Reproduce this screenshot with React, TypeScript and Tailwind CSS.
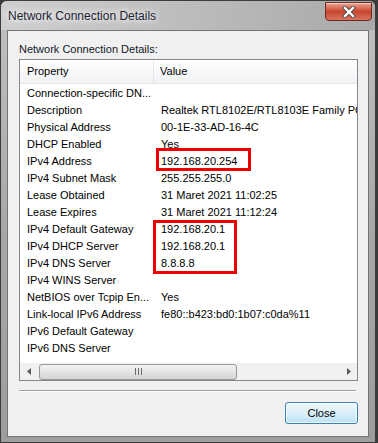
import React from 'react';

const rows: [string, string][] = [
  ['Connection-specific DN...', ''],
  ['Description', 'Realtek RTL8102E/RTL8103E Family PCI-E Fast Ethernet NIC (NDIS 6.20)'],
  ['Physical Address', '00-1E-33-AD-16-4C'],
  ['DHCP Enabled', 'Yes'],
  ['IPv4 Address', '192.168.20.254'],
  ['IPv4 Subnet Mask', '255.255.255.0'],
  ['Lease Obtained', '31 Maret 2021 11:02:25'],
  ['Lease Expires', '31 Maret 2021 11:12:24'],
  ['IPv4 Default Gateway', '192.168.20.1'],
  ['IPv4 DHCP Server', '192.168.20.1'],
  ['IPv4 DNS Server', '8.8.8.8'],
  ['IPv4 WINS Server', ''],
  ['NetBIOS over Tcpip En...', 'Yes'],
  ['Link-local IPv6 Address', 'fe80::b423:bd0:1b07:c0da%11'],
  ['IPv6 Default Gateway', ''],
  ['IPv6 DNS Server', ''],
];

const CloseButton: React.FC = () => (
  <div className="mt-[1px] mr-[3px] w-[47px] h-[19px] rounded-b-[4px] border border-[#6b2a22] bg-gradient-to-b from-[#e8a493] via-[#c8442f] to-[#d9725c] flex items-center justify-center shadow-[inset_0_1px_0_rgba(255,255,255,0.5)]">
    <svg width="14" height="12" viewBox="0 0 14 12">
      <path d="M3 2 L11 10 M11 2 L3 10" stroke="#4a4a4a" strokeWidth="4.2" strokeLinecap="square" />
      <path d="M3 2 L11 10 M11 2 L3 10" stroke="#ffffff" strokeWidth="2.4" strokeLinecap="square" />
    </svg>
  </div>
);

const ScrollBar: React.FC = () => (
  <div className="h-[17px] flex items-center bg-[#f0f0f0] shrink-0">
    <div className="w-[17px] h-full flex items-center justify-center">
      <svg width="4" height="7" viewBox="0 0 4 7"><path d="M4 0 L0 3.5 L4 7 Z" fill="#5a5a5a" /></svg>
    </div>
    <div className="ml-[2px] w-[198px] h-[16px] rounded-[3px] border border-[#979797] bg-gradient-to-b from-[#f4f4f4] via-[#e4e4e4] to-[#d5d5d5] flex items-center justify-center">
      <div className="flex gap-[2px]">
        <div className="w-[1px] h-[7px] bg-[#6a6a6a]" />
        <div className="w-[1px] h-[7px] bg-[#6a6a6a]" />
        <div className="w-[1px] h-[7px] bg-[#6a6a6a]" />
      </div>
    </div>
    <div className="flex-1" />
    <div className="w-[17px] h-full flex items-center justify-center">
      <svg width="4" height="7" viewBox="0 0 4 7"><path d="M0 0 L4 3.5 L0 7 Z" fill="#5a5a5a" /></svg>
    </div>
  </div>
);

export default function App() {
  return (
    <div className="relative w-[378px] h-[443px] bg-[#3a3a3a] overflow-hidden" style={{ fontFamily: '"Liberation Sans", Arial, sans-serif' }}>
      <div className="w-[376px] h-[443px] rounded-t-[7px] border border-[#3c3c3c] bg-gradient-to-b from-[#c2c2c2] via-[#a8a8a8] to-[#9d9d9d] flex flex-col">
        <div className="h-[29px] flex items-start justify-between bg-gradient-to-r from-[#cfcfcf] via-[#bcbcbc] to-[#a9a9a9] rounded-t-[6px]">
          <div className="pl-[7px] pt-[8px] text-[12px] leading-[14px] text-[#1c2333] [text-shadow:0_0_6px_#ffffff,0_0_10px_#ffffff]">
            Network Connection Details
          </div>
          <CloseButton />
        </div>
        <div className="ml-[6px] w-[362px] h-[407px] border border-[#6f757c] bg-[#f0f0f0] flex flex-col text-[11px] leading-[13px] text-black">
          <div className="pl-[11px] pt-[12px] text-[#101828]">Network Connection Details:</div>
          <div className="ml-[11px] mt-[3px] w-[339px] h-[322px] border border-[#828790] bg-white flex flex-col overflow-hidden">
            <div className="h-[24px] shrink-0 flex bg-gradient-to-b from-[#ffffff] to-[#f1f2f4] border-b border-[#e5e5e5]">
              <div className="w-[134px] pl-[7px] flex items-center border-r border-[#e3e5e8]">Property</div>
              <div className="pl-[6px] flex items-center">Value</div>
            </div>
            <div className="flex-1 pt-[1px]">
              {rows.map(([k, v]) => (
                <div key={k} className="h-[17px] flex items-center whitespace-nowrap">
                  <div className="w-[134px] pl-[7px] shrink-0">{k}</div>
                  <div className="pl-[7px] shrink-0">{v}</div>
                </div>
              ))}
            </div>
            <ScrollBar />
          </div>
          <div className="ml-[11px] mt-[9px] w-[337px] h-[1px] bg-[#a0a0a0] border-b border-white box-content" />
          <div className="flex justify-end pr-[10px] mt-[10px]">
            <div className="w-[73px] h-[22px] rounded-[3px] border border-[#3c7fb1] bg-gradient-to-b from-[#eef7fd] via-[#daeffa] to-[#bde2f6] flex items-center justify-center shadow-[inset_0_0_0_1px_rgba(255,255,255,0.7)]">
              Close
            </div>
          </div>
        </div>
      </div>
      <div className="absolute left-[156px] top-[148px] w-[95px] h-[23px] border-[3px] border-[#ee0000]" />
      <div className="absolute left-[153px] top-[220px] w-[84px] h-[54px] border-[3px] border-[#ee0000]" />
    </div>
  );
}
